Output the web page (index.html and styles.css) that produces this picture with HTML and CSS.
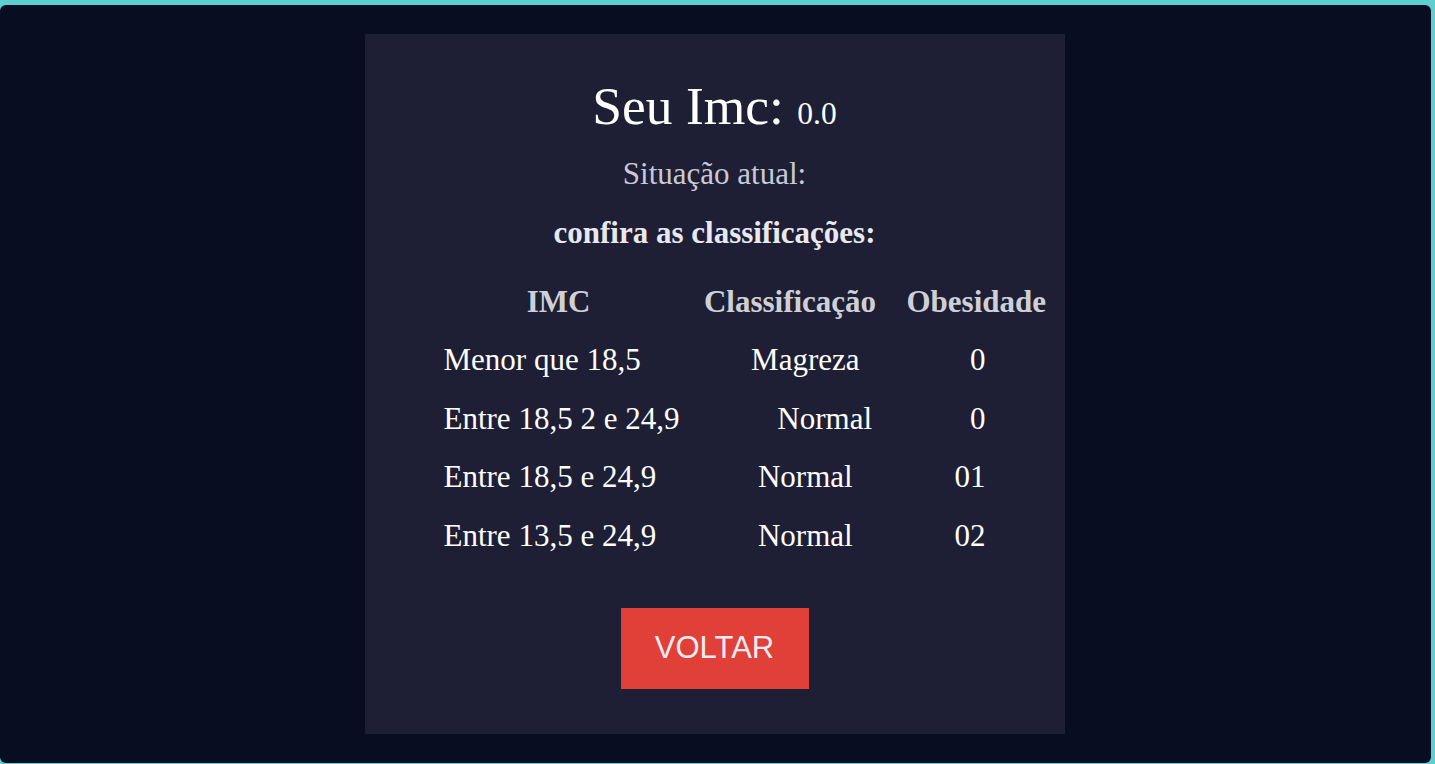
FILE: index.html
```html
<!DOCTYPE html>
<html lang="pt-BR">
<head>
<meta charset="utf-8">
<title>Resultado IMC</title>
<link rel="stylesheet" href="styles.css">
</head>
<body>
<main class="screen">
  <section class="card">
    <h1 class="title">Seu Imc: <span class="value">0.0</span></h1>
    <p class="status">Situação atual:</p>
    <h2 class="subtitle">confira as classificações:</h2>
    <div class="table">
      <div class="head">
        <span class="h-imc">IMC</span>
        <span class="h-class">Classificação</span>
        <span class="h-ob">Obesidade</span>
      </div>
      <div class="rows">
        <div class="row"><span>Menor que 18,5</span><span>Magreza</span><span>0</span></div>
        <div class="row"><span>Entre 18,5 2 e 24,9</span><span>Normal</span><span>0</span></div>
        <div class="row"><span>Entre 18,5 e 24,9</span><span>Normal</span><span>01</span></div>
        <div class="row"><span>Entre 13,5 e 24,9</span><span>Normal</span><span>02</span></div>
      </div>
    </div>
    <button class="back">VOLTAR</button>
  </section>
</main>
</body>
</html>
```

FILE: styles.css
```css
* { box-sizing: border-box; }
html, body { margin: 0; padding: 0; }
body {
  background: #5ecfd0;
  padding: 5px 4px 1px 0;
  height: 764px;
  overflow: hidden;
  font-family: "Liberation Serif", "Times New Roman", serif;
}
.screen {
  background: #080d22;
  border-radius: 6px;
  height: 758px;
  display: flex;
  justify-content: center;
  align-items: center;
}
.card {
  width: 700px;
  height: 700px;
  margin-right: 2px;
  background: #1e1f35;
  display: flex;
  flex-direction: column;
  align-items: center;
  padding-top: 42px;
}
.title {
  margin: 0;
  font-weight: normal;
  font-size: 53.5px;
  line-height: 60px;
  color: #ffffff;
}
.value {
  font-size: 31.5px;
}
.status {
  margin: 12px 0 0;
  font-size: 31px;
  line-height: 36px;
  color: #c8cad8;
}
.subtitle {
  margin: 23px 0 0;
  font-size: 31px;
  line-height: 36px;
  font-weight: bold;
  color: #e8e8ee;
}
.table {
  width: 542px;
  margin-top: 33px;
}
.head {
  display: grid;
  grid-template-columns: 230px 233px auto;
  font-size: 31px;
  line-height: 36px;
  font-weight: bold;
  color: #cfcfd6;
}
.h-imc, .h-class { text-align: center; }
.rows {
  display: flex;
  flex-direction: column;
  gap: 22.7px;
  margin-top: 22px;
}
.row {
  display: flex;
  justify-content: space-between;
  font-size: 31px;
  line-height: 36px;
  color: #ffffff;
}
.back {
  margin-top: 54px;
  width: 188px;
  height: 81px;
  border: none;
  background: #e04038;
  color: #f2ecf2;
  font-family: "Liberation Sans", Arial, sans-serif;
  font-size: 31px;
  padding: 0 0 2px;
}
```
